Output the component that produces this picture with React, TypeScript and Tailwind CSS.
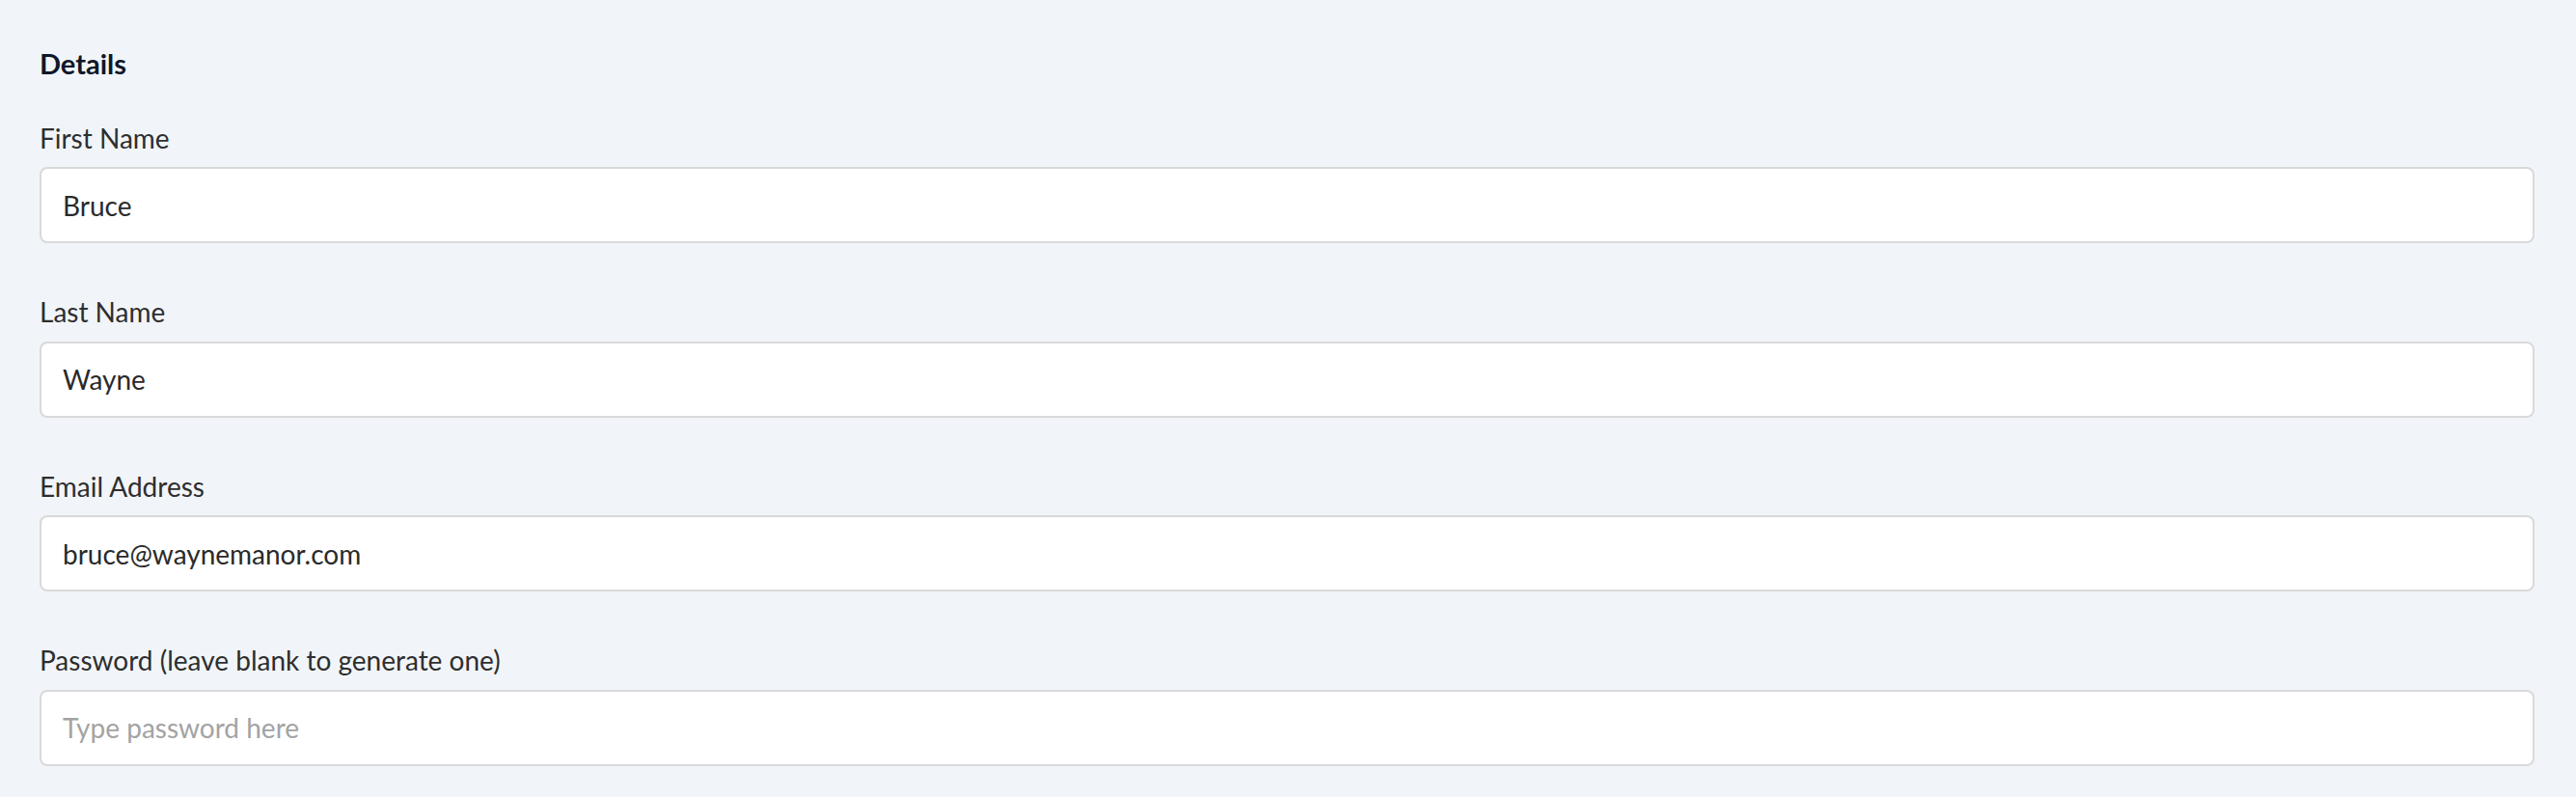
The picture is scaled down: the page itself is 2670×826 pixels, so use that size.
const fields = [
  { label: 'First Name', value: 'Bruce' },
  { label: 'Last Name', value: 'Wayne' },
  { label: 'Email Address', value: 'bruce@waynemanor.com' },
  { label: 'Password (leave blank to generate one)', value: '', placeholder: 'Type password here' },
];

export default function App() {
  return (
    <div className="min-h-[826px] w-full bg-[#f1f5f9] pl-[41px] pr-[43px] pt-[46px] font-['Lato','Noto_Sans',sans-serif] text-[28px]">
      <h2 className="text-[29px] leading-[40.5px] font-bold text-[#0f172a]">Details</h2>

      <div className="mt-[36px] flex flex-col gap-[51px]">
        {fields.map((f) => (
          <label key={f.label} className="flex flex-col">
            <span className="leading-[40.5px] text-[#2e2e2e]">{f.label}</span>
            <input
              readOnly
              value={f.value}
              placeholder={f.placeholder}
              className="mt-[10px] h-[79px] w-full rounded-[8px] border-2 border-[#d9d9d9] bg-white px-[22px] text-[28px] text-[#2a2a2a] outline-none placeholder:text-[#a3a3a3]"
            />
          </label>
        ))}
      </div>
    </div>
  );
}
